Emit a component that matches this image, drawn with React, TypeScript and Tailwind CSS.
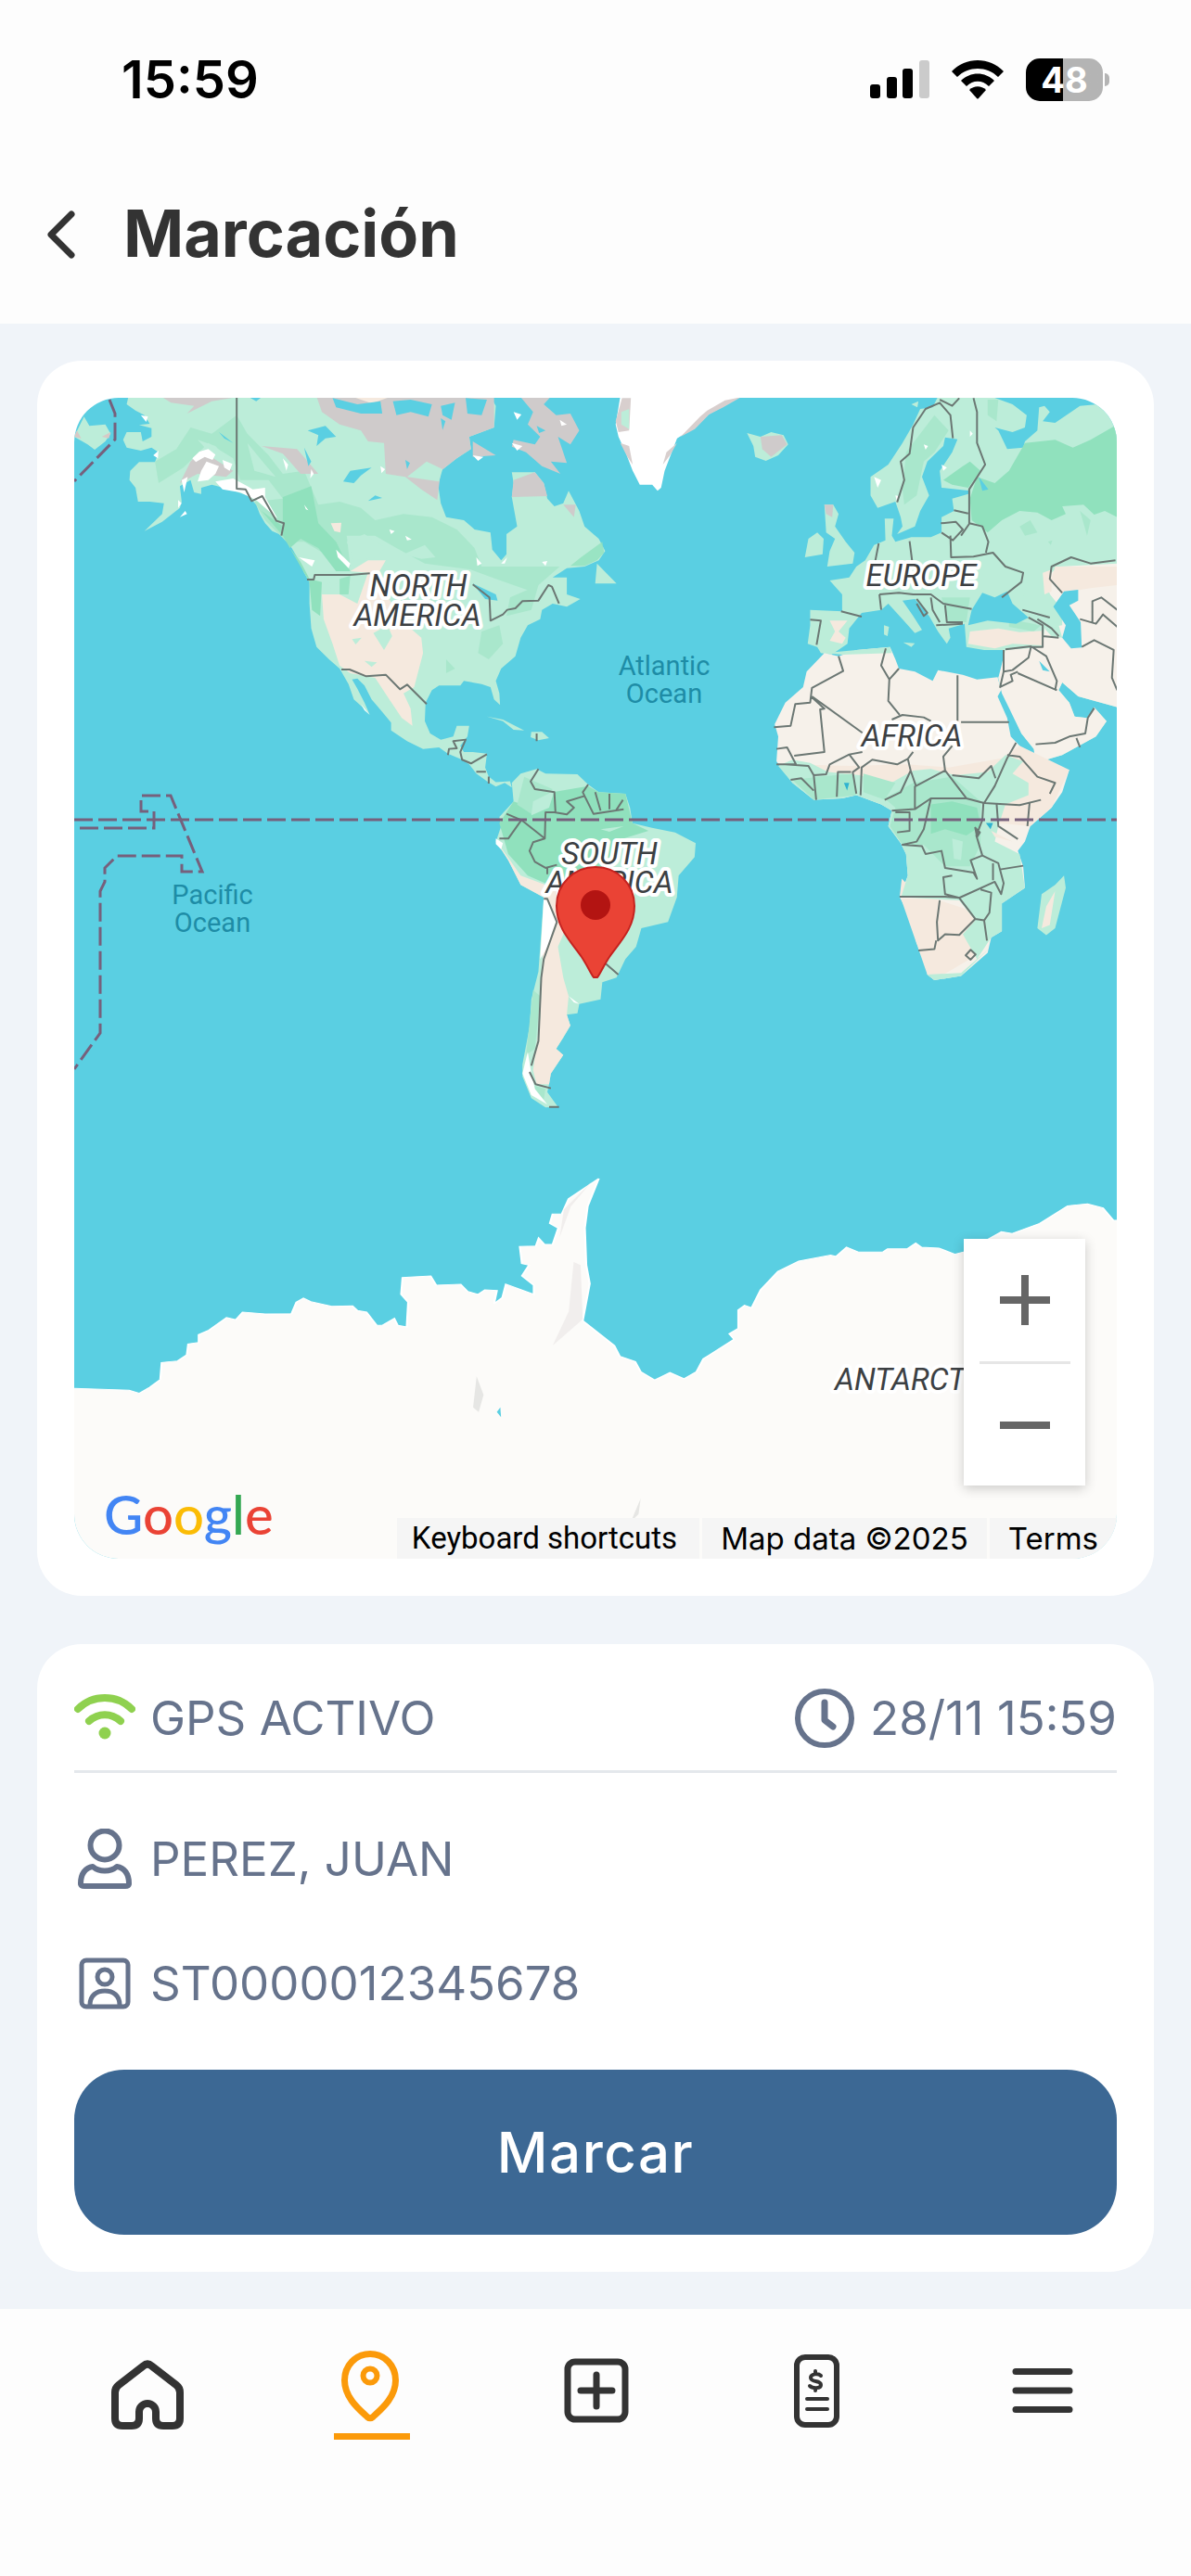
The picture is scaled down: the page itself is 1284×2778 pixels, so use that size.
import type { ReactNode } from "react";

const SignalIcon = () => (
  <svg viewBox="0 0 64 42" className="h-[42px] w-16" aria-hidden="true">
    <rect x="0" y="26" width="11" height="15" rx="3" />
    <rect x="18" y="18" width="11" height="23" rx="3" />
    <rect x="35" y="9" width="11" height="32" rx="3" />
    <rect x="53" y="0" width="11" height="41" rx="3" fill="#cbcbcb" />
  </svg>
);

const StatusWifiIcon = () => (
  <svg viewBox="0 0 56 42" className="h-[42px] w-14" aria-hidden="true">
    <path d="M0 12 C15 -4 41 -4 56 12 L50 18 C38 6 18 6 6 18 Z" />
    <path d="M10 22 C20 12 36 12 46 22 L40 28 C33 21 23 21 16 28 Z" />
    <path d="M19 32 C24 27 32 27 37 32 L29 41 Q28 42 27 41 Z" />
  </svg>
);

const BatteryIcon = () => (
  <div className="flex items-center gap-[2px]">
    <div className="flex h-[46px] w-[83px] items-center justify-center rounded-[15px] bg-linear-to-r from-black from-48% to-[#b4b4b4] to-48% font-['Inter',sans-serif] text-[38px] font-bold text-white">
      48
    </div>
    <span className="h-[14px] w-[5px] rounded-r-full bg-[#b4b4b4]" />
  </div>
);

const StatusBar = () => (
  <div className="flex h-[172px] items-center justify-between pr-[88px] pl-[131px]">
    <span className="text-[56px] font-semibold text-black">15:59</span>
    <div className="flex items-center gap-6">
      <SignalIcon />
      <StatusWifiIcon />
      <BatteryIcon />
    </div>
  </div>
);

const Header = () => (
  <header className="flex h-[177px] items-start gap-[52px] pl-[50px] text-[#333333]">
    <button type="button" aria-label="Volver" className="mt-[55px]">
      <svg viewBox="0 0 31 52" className="h-[52px] w-[31px]" fill="none" stroke="currentColor" strokeWidth="7" strokeLinecap="round" strokeLinejoin="round">
        <path d="M27 4 L5 26 L27 48" />
      </svg>
    </button>
    <h1 className="mt-10 text-[70px] leading-[80px] font-bold">Marcación</h1>
  </header>
);

/* World map, drawn in quadrants that each keep their own grid */
const NorthAmerica = () => (
  <g transform="translate(60 410) scale(0.3827 0.3333)">
    <path
      fill="#bcedd9"
      d="M205 50 L200 75 225 95 250 110 265 138 235 142 270 152 270 180 245 195 240 165 200 165 190 190 200 215 240 225 270 215 290 230 280 262 235 262 210 290 208 320 225 345 232 390 265 390 305 395 300 430 250 485 300 455 350 410 355 390 350 340 380 320 390 360 410 365 410 345 440 335 490 350 540 370 565 400 575 430 590 460 610 485 640 500 665 540 685 580 700 620 715 650 715 720 720 800 735 860 770 900 800 930 825 980 840 1030 865 1055 885 1080 870 1040 850 995 835 965 850 962 870 985 890 1030 920 1070 945 1105 945 1130 990 1165 1035 1190 1080 1185 1105 1205 1145 1225 1165 1240 1185 1270 1215 1295 1240 1312 1265 1300 1285 1315 1280 1295 1240 1298 1220 1280 1210 1250 1215 1205 1175 1200 1150 1200 1140 1180 1160 1150 1165 1115 1130 1115 1120 1150 1085 1160 1055 1140 1040 1100 1042 1040 1060 1000 1080 985 1140 985 1150 970 1200 980 1225 990 1235 1030 1252 1048 1250 1010 1240 970 1255 930 1295 890 1310 830 1330 790 1365 770 1370 740 1400 720 1440 730 1478 705 1440 690 1440 635 1400 635 1440 605 1490 600 1530 580 1548 550 1530 510 1490 470 1475 420 1445 355 1430 395 1405 405 1385 380 1375 330 1350 295 1285 295 1290 330 1285 375 1300 470 1270 495 1270 560 1255 580 1230 545 1225 490 1180 480 1150 450 1100 440 1085 395 1078 340 1085 290 1130 250 1170 220 1165 180 1200 165 1235 150 1240 80 1225 50 Z"
    />
    <path fill="#a9e7cc" d="M380 150 L440 170 510 110 540 170 600 240 640 300 700 290 740 400 800 390 860 410 900 450 980 430 1060 440 1130 480 1180 540 1200 600 1420 600 1340 680 1240 640 1170 610 1040 590 960 540 900 500 820 500 830 600 760 560 700 520 650 520 590 450 560 390 640 380 600 320 520 320 500 250 430 200 360 280 290 330 280 260 340 220 Z" />
    <path fill="#bcedd9" d="M400 190 L450 210 490 260 440 240 Z M540 200 L590 270 620 310 560 290 Z M820 520 L870 495 930 540 900 570 840 580 Z M980 560 L1040 530 1070 570 1030 575 Z" />
    <path fill="#90e1bd" d="M640 375 L720 340 740 460 790 520 830 615 790 615 740 540 690 510 660 540 690 585 715 640 750 650 745 760 722 740 715 650 680 580 640 500 580 420 640 470 Z" />
    <path fill="#90e1bd" d="M1480 570 L1540 520 1545 555 1525 580 1490 598 1450 598 Z M800 640 L830 630 825 690 800 690 Z" opacity=".8" />
    <path fill="#a9e7cc" d="M890 820 L940 790 945 830 925 870 Z M1200 810 L1250 790 1260 850 1220 900 1190 880 Z M1100 900 L1125 930 1100 945 Z M1280 700 L1360 660 1340 740 1270 760 Z" />
    <path fill="#f5e9de" d="M750 690 L800 690 850 720 880 620 830 615 880 580 930 580 900 640 990 790 1030 830 1035 880 1010 990 980 1010 1000 1060 1005 1115 975 1090 940 1030 900 960 830 945 800 920 780 850 755 770 Z" />
    <path fill="#bcedd9" d="M895 815 L935 790 948 825 925 870 Z M835 835 L862 830 845 852 Z M870 905 L905 910 890 925 Z M765 650 L790 655 775 670 Z" />
    <path fill="#cfcbcb" d="M735 50 L750 100 800 140 860 160 880 195 925 200 930 300 985 310 1030 350 1075 385 1085 290 1130 250 1170 220 1165 180 1235 150 1235 50 Z" />
    <path fill="#bcedd9" d="M990 310 L1045 260 1090 285 1080 325 Z" />
    <path fill="#cfcbcb" d="M1290 320 L1350 295 1375 330 1385 372 1285 375 Z M1310 52 L1395 50 1375 75 1410 110 1450 105 1475 160 1450 205 1415 180 1440 265 1395 260 1422 300 1370 275 1325 230 1285 212 1290 190 1350 205 1365 180 1330 140 1345 100 Z M1175 195 L1240 240 1175 245 Z M370 105 L440 65 510 52 300 52 325 70 390 80 Z M580 210 L680 220 740 300 690 300 640 235 Z M1430 400 L1465 400 1460 440 Z M350 330 L380 260 410 225 500 290 480 310 400 300 Z" />
    <path fill="#f5e9de" d="M840 52 L940 52 890 72 Z M775 460 L805 458 802 490 785 485 Z" />
    {/* lakes and inlets */}
    <path fill="#5acfe2" d="M780 55 L850 75 915 65 920 105 860 105 790 85 Z M950 65 L1000 60 1060 75 1050 115 1000 100 960 110 Z M1085 80 L1125 70 1115 125 1090 110 Z M1155 55 L1215 60 1200 110 1160 105 Z M1085 120 L1098 130 1090 158 Z M710 160 L760 145 790 180 760 185 735 210 740 175 Z M810 325 L830 290 890 280 860 305 840 330 Z M880 388 L900 370 920 378 Z M460 165 L500 200 475 185 Z M1175 655 L1240 690 1245 710 1210 705 Z M700 215 L720 260 712 275 Z M985 255 L998 265 990 285 Z" />
    <path fill="#5acfe2" d="M545 52 L580 52 565 65 Z M1355 145 L1380 160 1362 168 Z" />
    <path fill="#ffffff" d="M405 228 L430 220 450 238 442 255 420 245 395 262 385 250 Z M425 260 L460 275 450 300 430 320 400 325 410 290 Z M470 255 L498 268 490 290 475 280 Z M450 325 L500 315 540 340 555 350 590 345 590 375 625 445 600 420 565 385 520 360 470 350 Z M355 320 L372 310 362 360 Z M790 545 L830 590 825 605 795 570 Z M1185 570 L1200 590 1188 598 Z M1255 590 L1272 570 1265 590 Z M640 250 L655 270 650 290 Z M685 570 L730 580 722 600 Z M720 285 L727 300 717 315 Z M240 110 L260 115 255 132 Z M1285 200 L1315 210 1300 225 Z M1420 125 L1440 140 1425 145 Z M985 500 L1003 512 990 515 Z M940 480 L955 485 945 495 Z M1290 100 L1312 108 1300 125 Z M345 385 L355 395 345 410 Z M365 420 L370 430 350 440 Z M860 1045 L885 1080 870 1065 Z M1175 240 L1205 245 1190 258 Z M275 240 L290 225 288 250 Z M915 275 L928 285 918 298 Z M700 400 L712 418 705 415 Z M1370 585 L1385 582 1380 598 Z" />
    <path fill="#bcedd9" d="M52 180 L80 115 95 145 140 140 155 170 140 195 110 222 90 205 Z M1215 1085 L1260 1095 1320 1130 1290 1128 1260 1100 Z M1340 1135 L1370 1135 1390 1155 1360 1162 1338 1152 Z M1525 590 L1580 655 1520 655 Z" />
    <path fill="#d8c9c6" d="M52 180 L60 160 72 185 Z M130 180 L155 165 150 185 Z" />
    <g fill="none" stroke="#6b7773" strokeWidth="2" strokeLinejoin="round">
      <path vectorEffect="non-scaling-stroke" d="M510 52 V348 L535 350 552 388 582 372 622 452 643 460 636 500" />
      <path vectorEffect="non-scaling-stroke" d="M708 642 H727 L730 627 H830 L885 622 M1175 658 L1222 700 1225 775 1260 755 1272 740 1295 735 1315 712 1360 710 1388 660 1398 665 1418 720" />
      <path vectorEffect="non-scaling-stroke" d="M805 933 H828 L875 955 930 950 970 997 990 982 1045 1045 M1105 1210 L1108 1190 1130 1188 1120 1165 1155 1160 1140 1200 1145 1225 1170 1237 1215 1207 M1185 1264 H1212 M1220 1280 V1302 M1355 1140 V1165" />
    </g>
  </g>
);

const Eurasia = () => (
  <g transform="translate(640 410) scale(0.3827 0.3333)">
    <path fill="#ffffff" d="M75 50 H415 L360 85 320 110 285 150 235 185 220 230 200 290 190 345 180 355 165 335 130 335 110 290 90 230 70 180 62 140 Z" />
    <path fill="#d8cfce" d="M80 55 L105 55 100 160 70 165 62 130 Z M75 200 L100 210 110 270 95 245 Z M415 52 L370 62 320 95 300 115 245 180 285 155 325 108 365 85 Z M235 200 L205 230 195 270 215 240 Z" />
    <path fill="#bcedd9" d="M432 168 L470 180 500 165 535 175 548 205 520 240 485 258 455 245 450 210 Z M78 100 L100 90 100 155 78 140 Z" />
    <path fill="#cfcbcb" d="M470 180 L530 175 545 205 500 245 475 220 Z" />
    <path
      fill="#bcedd9"
      d="M970 50 L955 85 920 90 900 140 870 200 830 270 780 310 780 370 800 410 850 390 865 440 870 470 855 495 905 470 920 420 945 370 925 310 940 260 985 210 990 182 1025 188 1010 230 975 290 980 345 1060 355 1055 365 1010 380 1015 420 980 440 980 490 950 505 895 505 850 520 840 500 845 445 820 445 822 515 790 530 765 580 740 600 720 635 665 645 700 690 700 745 610 740 610 790 603 850 630 860 640 880 670 885 715 850 720 800 755 750 810 740 830 720 870 770 905 815 925 805 900 760 870 710 905 705 945 760 970 810 995 850 1005 830 1000 800 1045 785 1050 860 1100 870 1155 870 1150 930 1140 960 1145 990 1170 1050 1205 1140 1240 1190 1245 1235 1320 1210 1415 1150 1445 1100 1410 1055 1390 1090 1355 1085 1340 1040 1310 1000 1320 975 1365 1020 1475 1055 V110 L1420 75 1370 80 1300 135 1265 130 1285 100 1270 80 1255 85 1250 160 1215 195 1210 215 1165 220 1140 160 1130 150 1180 165 1215 150 1220 110 1180 75 1120 50 Z"
    />
    <path fill="#bcedd9" d="M650 400 L675 400 690 430 680 470 710 520 735 555 730 590 658 600 665 550 680 510 655 490 Z M605 510 L630 490 648 510 645 560 595 570 Z M818 790 L832 795 828 825 818 820 Z M872 845 L905 848 895 860 Z M895 75 L915 65 912 85 Z" />
    <path fill="#cfcbcb" d="M650 400 L675 400 672 440 655 430 Z" />
    <path fill="#90e1bd" d="M1215 200 L1300 190 1350 215 1400 190 1475 140 V440 L1440 420 1410 432 1380 400 1320 405 1330 430 1290 450 1250 425 1200 420 1150 450 1110 490 1065 450 1060 380 1080 310 1130 330 1170 290 Z M985 320 L1040 275 1060 260 1090 290 1055 345 1010 335 Z" />
    <path fill="#a9e7cc" d="M1200 470 L1230 450 1250 490 1215 500 Z M1280 520 L1292 515 1288 530 Z M1370 420 L1400 450 1390 500 1380 460 Z M880 230 L960 110 1000 160 960 230 930 260 910 370 875 400 870 350 Z M1110 60 L1140 60 1135 130 1110 110 Z M980 700 L1060 700 1050 780 1000 780 Z M1170 770 L1260 790 1240 810 1170 795 Z" />
    <path fill="#f6f1ea" d="M1475 590 L1310 600 1270 640 1285 690 1320 740 1320 790 1270 800 1265 860 1160 870 1140 960 1150 1010 1205 1140 1240 1190 1245 1235 1320 1210 1415 1150 1445 1100 1410 1055 1390 1090 1355 1085 1340 1040 1310 1000 1320 975 1365 1020 1475 1055 Z" />
    <path fill="#bcedd9" d="M1225 640 L1270 640 1285 690 1320 740 1315 780 1250 790 1200 740 Z M1270 800 L1310 790 1320 830 1290 825 Z" />
    <path fill="#f5e9de" d="M1060 810 L1140 800 1200 812 1262 808 1262 855 1180 850 1130 865 1055 850 Z M1475 600 L1300 600 1290 640 1320 685 1400 670 1475 660 Z M665 775 L715 775 690 810 710 830 700 850 665 840 680 810 Z M1265 620 L1290 610 1290 680 1270 690 Z" />
    <path fill="#5acfe2" d="M1095 685 L1130 700 1165 680 1180 720 1225 765 1190 785 1110 775 1055 790 1065 740 Z M1325 680 L1365 675 1365 710 1340 725 1372 780 1375 862 1345 865 1320 830 1330 790 1295 730 Z M1085 310 L1112 350 1095 355 Z M1255 905 L1285 940 1265 935 Z" />
    <path fill="#ffffff" d="M790 310 L810 320 800 345 Z M850 370 L862 372 855 392 Z M1060 160 L1068 170 1060 180 Z M980 270 L995 280 985 290 Z M930 205 L942 210 935 222 Z" />
    {/* Africa */}
    <path
      fill="#f6f1ea"
      d="M650 880 L690 890 740 870 835 860 850 900 860 930 905 940 955 970 970 935 1040 950 1080 965 1138 958 1148 1000 1138 1020 1165 1090 1175 1150 1200 1180 1245 1255 1270 1270 1340 1258 1320 1330 1290 1380 1230 1440 1215 1490 1195 1520 1210 1570 1215 1640 1150 1690 1150 1780 1120 1800 1110 1850 1035 1925 960 1938 940 1920 940 1880 910 1820 890 1730 862 1670 885 1600 880 1530 865 1495 830 1440 840 1390 810 1370 740 1340 700 1350 620 1355 560 1300 515 1230 520 1150 510 1110 540 1040 590 990 600 940 Z"
    />
    <path fill="#f5e9de" d="M560 1240 L720 1245 880 1240 1000 1250 1150 1220 1200 1180 1340 1258 1290 1380 1230 1440 1140 1430 1100 1300 900 1300 700 1290 Z M868 1610 L885 1630 862 1670 Z M866 1675 L960 1675 1080 1720 1060 1800 1090 1850 960 1938 940 1920 Z" />
    <path fill="#bcedd9" d="M560 1225 L610 1235 660 1265 750 1275 830 1305 900 1260 950 1255 1020 1275 1110 1265 1160 1210 1210 1230 1180 1270 1225 1300 1225 1340 1160 1370 1140 1440 1130 1490 1200 1530 1215 1640 1150 1690 1150 1780 1120 1800 1080 1870 1040 1790 1075 1745 1030 1680 866 1670 885 1600 880 1530 865 1495 830 1440 840 1390 810 1370 740 1340 700 1350 620 1355 560 1300 520 1245 Z M650 880 L740 870 835 860 840 880 700 885 Z M960 1938 L940 1920 1035 1915 1110 1840 1035 1925 Z" />
    <path fill="#a9e7cc" d="M560 1290 L640 1280 730 1270 740 1340 620 1355 Z M900 1300 L1010 1280 1090 1360 1090 1500 1060 1570 990 1570 930 1500 870 1500 835 1440 850 1380 820 1350 Z M760 1270 L850 1300 820 1355 760 1330 Z" />
    <path fill="#90e1bd" d="M950 1370 L1010 1360 1080 1380 1090 1440 1050 1470 990 1450 950 1465 Z" />
    <path fill="#bcedd9" d="M1325 1600 L1330 1640 1300 1770 1275 1793 1250 1770 1262 1660 1300 1630 Z M1010 1480 L1040 1490 1035 1550 1015 1545 Z" />
    <path fill="#f5e9de" d="M1300 1650 L1285 1760 1262 1770 1275 1700 Z M1120 1455 L1180 1490 1130 1475 Z" />
    <path fill="#2fb3d0" d="M1105 1430 L1125 1430 1118 1450 Z M705 1300 L720 1300 714 1325 Z" />
    <g fill="none" stroke="#6b7773" strokeWidth="2" strokeLinejoin="round">
      <path vectorEffect="non-scaling-stroke" d="M855 392 L875 320 865 260 890 235 900 150 935 90 975 70 1005 110 1012 185 M975 60 L1010 80 1030 55 M1070 55 L1080 100 1080 200 1103 270 1058 350 V460 L1095 470 1112 520 1105 555 M1015 418 L1055 428 M978 460 L1020 455 1040 480 1012 515 980 490 M1058 462 L1035 500 M1005 500 L1007 570 1070 568 1125 555 1160 600 1210 620 1205 650 1150 700 M890 518 L897 580 M803 525 L792 590" />
      <path vectorEffect="non-scaling-stroke" d="M697 745 L755 762 M610 772 L640 775 628 853 M805 690 L810 740 M805 690 L860 685 900 690 950 690 985 720 1065 737 M910 705 L940 750 930 760 910 720 M950 700 L955 740 975 780 M990 725 L995 780 1040 780 M965 790 L1040 785 M1208 740 L1285 765 M1225 765 L1265 790 1265 860 1232 860 1225 895 1180 935 1155 940 M1160 868 L1232 858 1275 890 1305 970 1300 1000 M1265 825 L1310 830 M1250 770 L1290 800 1310 825 M1320 685 L1285 640 1290 600 1345 570 1400 590 1470 580 M1405 780 V712 L1430 700 1475 740 M1370 770 L1415 785 1435 755 1475 795 M1375 860 L1410 838 1465 870 1460 960 1475 1000" />
      <path vectorEffect="non-scaling-stroke" d="M690 890 L703 938 615 993 610 1040 568 1045 555 1115 508 1120 M615 1020 L757 1138 M612 1020 L650 1060 638 1062 650 1200 565 1212 M823 865 L810 920 833 965 860 930 M833 965 L830 1035 862 1080 M840 1095 L870 1080 930 1088 950 1100 M1025 952 V1100 M1035 1103 H1170 M1155 870 V940 L1145 990 1180 970 1175 950 1195 940 M1195 945 L1305 1000 M1245 1175 L1300 1170 1340 1150 1385 1140 1392 1090 1410 1058 M1360 1155 L1370 1185" />
      <path vectorEffect="non-scaling-stroke" d="M515 1190 L545 1185 570 1240 515 1240 M540 1240 L605 1245 620 1275 655 1272 665 1240 720 1208 757 1200 M720 1208 L748 1250 730 1265 740 1335 M620 1275 L627 1355 M555 1290 L585 1285 620 1325 M685 1345 L688 1265 725 1265 M752 1340 L755 1250 785 1225 855 1240 885 1222 900 1200 M885 1222 L893 1260 865 1330 820 1355 M893 1260 L908 1310 990 1260 985 1215 1010 1180 M990 1260 L1050 1350 1100 1365 1130 1310 1165 1220 1190 1170 M1010 1275 L1085 1285 1120 1245 1132 1285 M1165 1210 L1200 1215 1250 1280 1300 1300 1285 1335 M1100 1365 L1200 1372 1260 1355 M905 1310 L905 1385 840 1390 M905 1385 L950 1350 1050 1350" />
      <path vectorEffect="non-scaling-stroke" d="M950 1350 L930 1450 910 1490 870 1500 925 1505 935 1530 980 1520 990 1575 1070 1590 1080 1610 1062 1550 1095 1535 1078 1470 1095 1420 1098 1365 M850 1395 L890 1395 890 1455 855 1460 M1135 1365 L1140 1440 1195 1482 M1228 1365 L1222 1440 M1095 1535 L1140 1560 1155 1625 1148 1660 1130 1620 1030 1672 990 1660 985 1605 1010 1600 M1145 1580 L1210 1568 M862 1668 L990 1668 1030 1672 1075 1740 1030 1792 990 1790 970 1810 967 1750 975 1680 M1090 1645 L1120 1655 1115 1720 1100 1745 1075 1740 M1100 1745 L1108 1810 M965 1810 L960 1838 915 1842 M1048 1858 L1062 1840 1076 1855 1062 1872 Z M1075 1445 L1088 1460 1080 1475 Z M1125 1560 L1125 1615" />
    </g>
  </g>
);

const SouthAmerica = () => (
  <g transform="translate(60 820) scale(0.3827 0.3333)">
    <path
      fill="#bcedd9"
      d="M1355 25 L1380 40 1470 42 1500 75 1530 100 1605 105 1618 150 1625 200 1680 215 1745 230 1803 265 1800 310 1755 370 1750 440 1725 520 1650 540 1635 600 1605 640 1580 700 1540 715 1535 770 1475 785 1470 815 1440 820 1450 855 1430 895 1410 930 1430 950 1395 1010 1390 1045 1385 1070 1415 1118 1380 1120 1340 1090 1315 1020 1315 980 1335 860 1340 770 1360 680 1375 440 1310 400 1275 320 1240 260 1255 210 1250 180 1290 130 1285 70 1310 40 Z"
    />
    <path fill="#90e1bd" d="M1290 130 L1340 150 1400 100 1500 80 1530 100 1605 105 1625 200 1670 225 1600 250 1500 400 1390 400 1330 370 1275 300 1250 200 Z" />
    <path fill="#a9e7cc" d="M1320 50 L1400 90 1340 170 1300 140 Z M1345 740 L1365 760 1350 930 1325 950 Z M1350 1050 L1380 1060 1375 1095 1350 1080 Z" />
    <path fill="#bcedd9" d="M1345 130 L1405 95 1390 150 1340 175 Z M1535 220 L1600 210 1560 228 Z" />
    <path fill="#f5e9de" d="M1240 255 L1280 320 1310 370 1380 400 1440 430 1430 560 1415 600 1430 700 1445 760 1440 820 1450 855 1410 930 1430 950 1395 1010 1390 1045 1355 1045 1345 1000 1365 830 1372 620 1375 440 1310 400 1275 320 Z" />
    <path fill="#ffffff" d="M1240 250 L1260 265 1255 285 1240 268 Z M1375 440 L1390 460 1410 515 1385 600 1365 640 Z M1330 940 L1340 1010 1350 1060 1385 1110 1340 1080 1315 1010 Z M1445 760 L1475 785 1460 780 Z" />
    <g fill="none" stroke="#6b7773" strokeWidth="2" strokeLinejoin="round">
      <path vectorEffect="non-scaling-stroke" d="M1360 25 L1338 65 1350 90 1405 100 1408 165 1380 165 1378 250 1345 262 1335 290 1350 325 1380 345 1412 335 M1270 170 L1312 190 1378 250 M1250 250 L1275 250 1312 190 M1405 165 L1440 172 1460 150 1440 130 1490 112 1515 170 1600 155 M1500 75 L1485 100 1490 112 M1520 100 L1535 160 M1560 105 L1560 155 M1598 125 L1578 160 M1385 345 V365 M1375 445 L1385 445 1412 520 1375 640 1368 700 1360 905 1340 985 M1335 1005 L1352 1045 1395 1058 M1545 650 L1585 690 M1390 1118 H1418" />
    </g>
  </g>
);

const Antarctica = () => (
  <g transform="translate(60 1240) scale(0.7526 0.3333)">
    <path
      fill="#fcfbf9"
      stroke="#ffffff"
      strokeWidth="3"
      d="M20 768 L105 775 120 785 135 765 150 740 152 685 175 680 188 660 190 625 205 620 205 595 220 580 245 540 258 547 268 522 300 528 338 527 345 490 355 477 365 488 395 503 425 502 432 517 445 522 460 565 468 565 485 543 490 565 503 570 505 490 495 465 497 410 537 405 545 435 580 432 590 455 605 465 615 450 632 452 628 495 640 475 645 432 685 465 685 435 668 405 678 370 668 365 665 310 688 308 692 283 700 303 712 303 720 250 708 235 712 205 725 205 735 155 778 90 762 180 758 250 760 370 765 430 755 550 800 630 808 665 830 682 838 715 858 742 880 718 900 738 918 715 928 673 972 610 965 592 978 575 978 515 987 500 997 508 1010 450 1035 390 1065 357 1110 338 1118 342 1133 312 1150 328 1185 328 1192 317 1220 317 1232 299 1240 312 1265 315 1288 335 1305 325 1355 262 1370 268 1410 235 1450 178 1478 172 1500 185 1515 225 1526 225 V1330 H20 Z"
    />
    <path fill="#e6e6e4" d="M603 730 L613 790 606 845 598 830 Z M838 1125 L835 1175 824 1200 Z" />
    <path fill="#f1eeed" d="M742 360 L752 370 755 545 712 630 735 520 Z M768 100 L738 180 722 280 728 190 Z" />
    <path fill="#5acfe2" d="M632 845 L637 830 638 862 Z" />
  </g>
);

const WorldMap = () => (
  <svg viewBox="80 428 1124 1252" preserveAspectRatio="xMidYMid slice" className="block h-full w-full" role="img" aria-label="Mapa">
    <rect x="80" y="428" width="1124" height="1252" fill="#5acfe2" />
    <NorthAmerica />
    <SouthAmerica />
    <Eurasia />
    <Antarctica />
    {/* date line and equator */}
    <g fill="none" stroke="#76607c" strokeWidth="3" strokeDasharray="20 6">
      <path d="M80 883 H1204" />
      <path d="M118 430 L124 445 V473 L80 518" />
      <path d="M86 892 H166 V874 H152 V857 H184 L218 939 H196 V922 H126 L113 935 V950 L108 960 V1113 L80 1152" />
    </g>
    <g fontFamily="Roboto, sans-serif" fontSize="33" fontStyle="italic" textAnchor="middle" fill="#3c4043" stroke="#ffffff" strokeWidth="8" strokeLinejoin="round" paintOrder="stroke">
      <text x="451" y="642">NORTH</text>
      <text x="450" y="674">AMERICA</text>
      <text x="993" y="631">EUROPE</text>
      <text x="983" y="804">AFRICA</text>
      <text x="657" y="931">SOUTH</text>
      <text x="657" y="962">AMERICA</text>
      <text x="900" y="1498" textAnchor="start">ANTARCT</text>
    </g>
    <g fontFamily="Roboto, sans-serif" fontSize="29" textAnchor="middle" fill="#1e8ca6">
      <text x="716" y="727">Atlantic</text>
      <text x="716" y="757">Ocean</text>
      <text x="229" y="974">Pacific</text>
      <text x="229" y="1004">Ocean</text>
    </g>
    <path d="M642 934 C619 934 600 952 600 976 C600 1000 616 1015 627 1031 C633 1040 637 1049 640 1053 H644 C647 1049 651 1040 657 1031 C668 1015 684 1000 684 976 C684 952 665 934 642 934 Z" fill="#ea4335" stroke="#c5221f" strokeWidth="2" />
    <circle cx="642" cy="975" r="16" fill="#b31412" />
  </svg>
);

const ZoomControl = () => (
  <div className="absolute right-[34px] bottom-[79px] flex w-[131px] flex-col items-center bg-white text-[#666666] shadow-[0_3px_12px_rgba(0,0,0,0.2)]">
    <button type="button" aria-label="Acercar" className="flex h-[132px] w-full items-center justify-center">
      <svg viewBox="0 0 54 54" className="size-[54px]" fill="none" stroke="currentColor" strokeWidth="8">
        <path d="M27 0 V54 M0 27 H54" />
      </svg>
    </button>
    <span className="h-[3px] w-[98px] bg-[#e6e6e6]" />
    <button type="button" aria-label="Alejar" className="flex h-[131px] w-full items-center justify-center">
      <svg viewBox="0 0 54 54" className="size-[54px]" fill="none" stroke="currentColor" strokeWidth="8">
        <path d="M0 27 H54" />
      </svg>
    </button>
  </div>
);

const MapCard = () => (
  <section className="rounded-[48px] bg-white p-10">
    <div className="relative aspect-[281/313] overflow-hidden rounded-[48px]">
      <WorldMap />
      <ZoomControl />
      <a href="#google" className="absolute bottom-3 left-8 font-['Lato',sans-serif] text-[58px] leading-[72px] font-medium">
        <span className="text-[#4285f4]">G</span>
        <span className="text-[#ea4335]">o</span>
        <span className="text-[#fbbc05]">o</span>
        <span className="text-[#4285f4]">g</span>
        <span className="text-[#34a853]">l</span>
        <span className="text-[#ea4335]">e</span>
      </a>
      <div className="absolute right-0 bottom-0 flex gap-[3px] text-[33px] leading-[44px] text-black">
        <button type="button" className="bg-[#f5f5f5] pr-6 pl-4 font-['Roboto',sans-serif]">
          Keyboard shortcuts
        </button>
        <span className="bg-[#f5f5f5] px-5">Map data ©2025</span>
        <a href="#terms" className="bg-[#f5f5f5] px-5">
          Terms
        </a>
      </div>
    </div>
  </section>
);

const InfoItem = ({ icon, children }: { icon: ReactNode; children: ReactNode }) => (
  <div className="flex h-16 items-center gap-4">
    {icon}
    <span>{children}</span>
  </div>
);

const GpsIcon = () => (
  <svg viewBox="0 0 66 66" className="size-[66px]" fill="none" stroke="#8fd14f" strokeWidth="8" strokeLinecap="round" aria-hidden="true">
    <path d="M4 23 C20 7 46 7 62 23" />
    <path d="M16 36 C26 27 40 27 50 36" />
    <circle cx="33" cy="49" r="6.5" fill="#8fd14f" stroke="none" />
  </svg>
);

const ClockIcon = () => (
  <svg viewBox="0 0 66 66" className="size-[66px]" fill="none" stroke="currentColor" strokeWidth="6" strokeLinecap="round" strokeLinejoin="round" aria-hidden="true">
    <circle cx="33" cy="33" r="29" />
    <path d="M33 16 V35 L42 42" strokeWidth="7" />
  </svg>
);

const PersonIcon = () => (
  <svg viewBox="0 0 66 66" className="size-[66px]" fill="none" stroke="currentColor" strokeWidth="6" strokeLinejoin="round" aria-hidden="true">
    <circle cx="33" cy="18" r="15.5" />
    <path d="M20 41 C27 47 39 47 46 41 C54 42 59 49 59 59 Q59 62 55 62 H11 Q7 62 7 59 C7 49 12 42 20 41 Z" />
  </svg>
);

const BadgeIcon = () => (
  <svg viewBox="0 0 66 66" className="size-[66px]" fill="none" stroke="currentColor" strokeWidth="5" aria-hidden="true">
    <rect x="8" y="8" width="50" height="50" rx="5" />
    <circle cx="33" cy="26" r="8" />
    <path d="M17 56 C17 46 24 41 33 41 C42 41 49 46 49 56" />
  </svg>
);

const CheckInCard = () => (
  <section className="flex flex-col gap-[61px] rounded-[48px] bg-white px-10 pt-12 pb-10 text-[51px] leading-16 text-[#66738c]">
    <div className="flex justify-between border-b-3 border-[#e4e8ec] pb-6">
      <InfoItem icon={<GpsIcon />}>GPS ACTIVO</InfoItem>
      <InfoItem icon={<ClockIcon />}>28/11 15:59</InfoItem>
    </div>
    <div className="flex flex-col gap-[70px]">
      <InfoItem icon={<PersonIcon />}>PEREZ, JUAN</InfoItem>
      <InfoItem icon={<BadgeIcon />}>ST0000012345678</InfoItem>
    </div>
    <button type="button" className="h-[178px] rounded-[54px] bg-[#3c6894] text-[60px] font-medium tracking-wide text-white">
      Marcar
    </button>
  </section>
);

const NavItem = ({ label, active, children }: { label: string; active?: boolean; children: ReactNode }) => (
  <a href={`#${label}`} aria-label={label} className={`flex flex-col items-center gap-[2px] ${active ? "text-[#fb9a0a]" : "text-[#333333]"}`}>
    <svg viewBox="0 0 82 88" className="h-[88px] w-[82px]" fill="none" stroke="currentColor" strokeWidth="7" strokeLinecap="round" strokeLinejoin="round">
      {children}
    </svg>
    {active && <span className="h-[7px] w-[82px] bg-current" />}
  </a>
);

const BottomNav = () => (
  <nav className="grid h-72 grid-cols-5 items-start bg-[#fdfdfd] px-10 pt-11">
    <NavItem label="inicio">
      <path d="M35.5 17.5 Q40 13.5 44.5 17.5 L71 38 Q75 41 75 46 V74 Q75 82 67 82 H57 Q49 82 49 74 V67 A9 9 0 0 0 31 67 V74 Q31 82 23 82 H13 Q5 82 5 74 V46 Q5 41 9 38 Z" strokeWidth="8" />
    </NavItem>
    <NavItem label="marcacion" active>
      <path d="M39 4.5 C54.5 4.5 66.5 17 66.5 33 C66.5 52 50 65 42 72.5 Q39 75 36 72.5 C28 65 11.5 52 11.5 33 C11.5 17 23.5 4.5 39 4.5 Z" />
      <circle cx="39" cy="28" r="7.5" strokeWidth="6" />
    </NavItem>
    <NavItem label="nuevo">
      <rect x="11" y="13" width="62" height="62" rx="8" />
      <path d="M42 27 V61 M25 44 H59" />
    </NavItem>
    <NavItem label="recibos">
      <rect x="17" y="8" width="43" height="73" rx="9" strokeWidth="6" />
      <path d="M43 28 C40 25 32 26 32 30 C32 36 43 32 43 38 C43 42 34 42 31 39 M37 23 V26 M37 42 V44" strokeWidth="4" />
      <path d="M28 53 H50 M28 64 H50" strokeWidth="4" />
    </NavItem>
    <NavItem label="menu">
      <path d="M12 23.5 H70 M12 44 H70 M12 64.5 H70" />
    </NavItem>
  </nav>
);

const App = () => {
  return (
    <div className="flex min-h-screen flex-col bg-[#fdfdfd] font-['Inter',sans-serif]">
      <StatusBar />
      <Header />
      <main className="flex flex-1 flex-col gap-[52px] bg-[#f0f4f9] p-10">
        <MapCard />
        <CheckInCard />
      </main>
      <BottomNav />
    </div>
  );
};

export default App;
